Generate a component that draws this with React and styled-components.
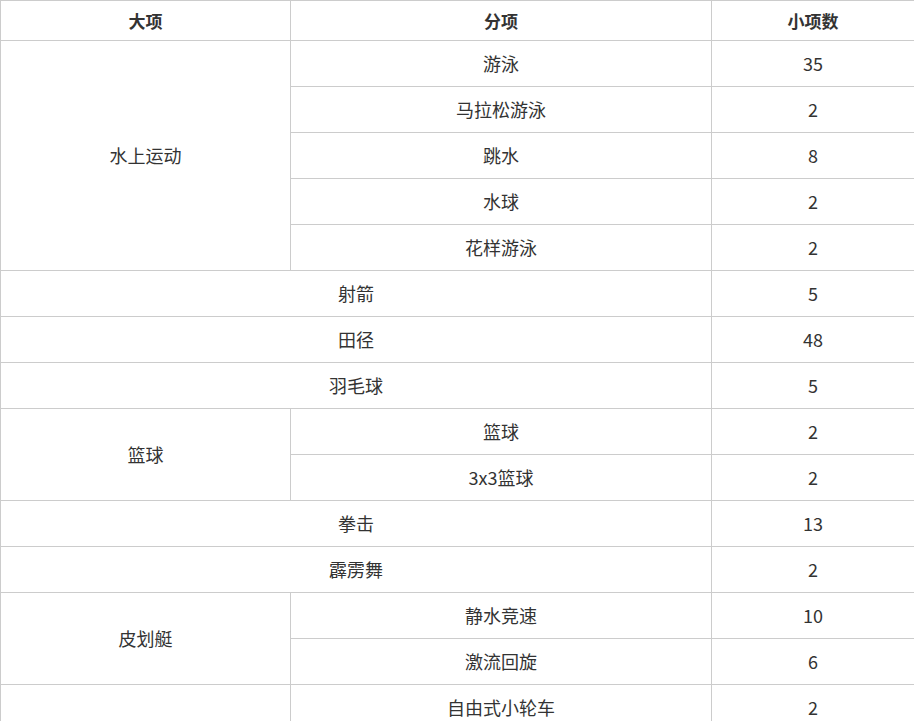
import React from "react";
import styled, { createGlobalStyle } from "styled-components";

const Global = createGlobalStyle`
  html, body { margin: 0; padding: 0; background: #fff; overflow: hidden; }
  body { font-family: "Noto Sans CJK SC", "Noto Sans", sans-serif; color: #333; }
`;

const Table = styled.table`
  width: 914px;
  border-collapse: collapse;
  table-layout: fixed;
  font-size: 18px;
`;

const Head = styled.th`
  height: 39px;
  padding: 0;
  border: 1px solid #ccc;
  font-weight: bold;
  font-size: 17px;
  color: #333;
  text-align: center;
  vertical-align: middle;
`;

const Cell = styled.td`
  height: 45px;
  padding: 0;
  border: 1px solid #ccc;
  text-align: center;
  vertical-align: middle;
  color: #333;
  font-weight: 400;
  line-height: 1.2;
`;

const data = [
  { group: "水上运动", items: [["游泳", 35], ["马拉松游泳", 2], ["跳水", 8], ["水球", 2], ["花样游泳", 2]] },
  { name: "射箭", count: 5 },
  { name: "田径", count: 48 },
  { name: "羽毛球", count: 5 },
  { group: "篮球", items: [["篮球", 2], ["3x3篮球", 2]] },
  { name: "拳击", count: 13 },
  { name: "霹雳舞", count: 2 },
  { group: "皮划艇", items: [["静水竞速", 10], ["激流回旋", 6]] },
  { group: "自行车", items: [["自由式小轮车", 2], ["小轮车竞速", 2], ["山地自行车", 2], ["公路自行车", 4], ["场地自行车", 12]] },
];

export default function App() {
  const rows = [];
  data.forEach((d, i) => {
    if (d.group) {
      d.items.forEach(([n, c], j) => {
        rows.push(
          <tr key={`${i}-${j}`}>
            {j === 0 && <Cell rowSpan={d.items.length}>{d.group}</Cell>}
            <Cell>{n}</Cell>
            <Cell>{c}</Cell>
          </tr>
        );
      });
    } else {
      rows.push(
        <tr key={i}>
          <Cell colSpan={2}>{d.name}</Cell>
          <Cell>{d.count}</Cell>
        </tr>
      );
    }
  });
  return (
    <>
      <Global />
      <Table>
        <colgroup>
          <col style={{ width: 290 }} />
          <col style={{ width: 421 }} />
          <col style={{ width: 203 }} />
        </colgroup>
        <thead>
          <tr>
            <Head>大项</Head>
            <Head>分项</Head>
            <Head>小项数</Head>
          </tr>
        </thead>
        <tbody>{rows}</tbody>
      </Table>
    </>
  );
}
